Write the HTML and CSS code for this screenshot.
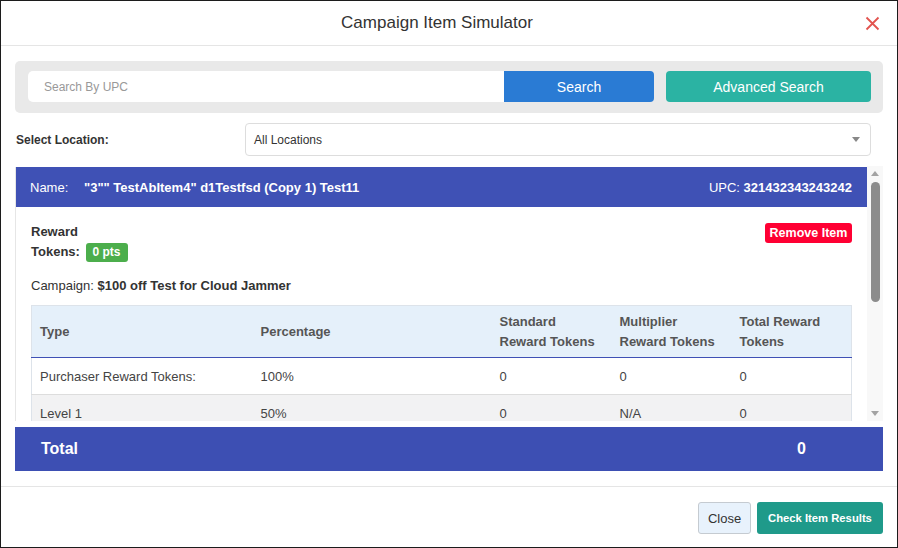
FILE: index.html
```html
<!DOCTYPE html>
<html lang="en">
<head>
    <meta charset="UTF-8">
    <meta name="viewport" content="width=device-width, initial-scale=1.0">
    <title>Campaign Item Simulator</title>
    <link rel="stylesheet" href="styles.css">
</head>
<body>
    <div class="modal">
        <div class="modal-header">
            <h2 class="modal-title">Campaign Item Simulator</h2>
            <button class="close-x" aria-label="Close">
                <svg width="15" height="15" viewBox="0 0 15 15">
                    <path d="M1.5 1.5 L13.5 13.5 M13.5 1.5 L1.5 13.5" stroke="#e2544f" stroke-width="1.8" fill="none"/>
                </svg>
            </button>
        </div>

        <div class="modal-body">
            <div class="search-panel">
                <div class="search-group">
                    <input type="text" class="search-input" placeholder="Search By UPC">
                    <button class="btn-search">Search</button>
                </div>
                <button class="btn-advanced">Advanced Search</button>
            </div>

            <div class="location-row">
                <label class="location-label">Select Location:</label>
                <div class="location-select">
                    <span>All Locations</span>
                    <span class="caret"></span>
                </div>
            </div>

            <div class="scroll-area">
                <div class="scroll-content">
                    <div class="item-header">
                        <div class="item-name"><span class="name-label">Name:</span><b>"3"" TestAbItem4" d1Testfsd (Copy 1) Test11</b></div>
                        <div class="item-upc">UPC: <b>321432343243242</b></div>
                    </div>
                    <div class="item-body">
                        <div class="tokens-row">
                            <div class="tokens-label">Reward<br>Tokens: <span class="badge">0 pts</span></div>
                            <button class="btn-remove">Remove Item</button>
                        </div>
                        <p class="campaign">Campaign: <b>$100 off Test for Cloud Jammer</b></p>

                        <table class="rewards">
                            <thead>
                                <tr>
                                    <th class="col-type">Type</th>
                                    <th class="col-pct">Percentage</th>
                                    <th class="col-num">Standard<br>Reward Tokens</th>
                                    <th class="col-num">Multiplier<br>Reward Tokens</th>
                                    <th class="col-num">Total Reward<br>Tokens</th>
                                </tr>
                            </thead>
                            <tbody>
                                <tr>
                                    <td>Purchaser Reward Tokens:</td>
                                    <td>100%</td>
                                    <td>0</td>
                                    <td>0</td>
                                    <td>0</td>
                                </tr>
                                <tr class="alt">
                                    <td>Level 1</td>
                                    <td>50%</td>
                                    <td>0</td>
                                    <td>N/A</td>
                                    <td>0</td>
                                </tr>
                            </tbody>
                        </table>
                    </div>
                </div>
                <div class="scrollbar">
                    <span class="arrow-up"></span>
                    <div class="scroll-track"><div class="scroll-thumb"></div></div>
                    <span class="arrow-down"></span>
                </div>
            </div>

            <div class="total-bar">
                <span class="total-label">Total</span>
                <span class="total-value">0</span>
            </div>
        </div>

        <div class="modal-footer">
            <button class="btn-close">Close</button>
            <button class="btn-check">Check Item Results</button>
        </div>
    </div>
</body>
</html>
```

FILE: styles.css
```css
* {
    margin: 0;
    padding: 0;
    box-sizing: border-box;
}

body {
    font-family: "Liberation Sans", Arial, sans-serif;
    font-size: 13px;
    color: #333;
    background-color: #fff;
}

button {
    font-family: inherit;
    border: none;
    cursor: pointer;
}

.modal {
    width: 898px;
    height: 548px;
    border: 1px solid #1c1c1c;
    background-color: #fff;
    display: flex;
    flex-direction: column;
    overflow: hidden;
}

/* header */
.modal-header {
    height: 45px;
    border-bottom: 1px solid #e5e5e5;
    display: flex;
    align-items: center;
    justify-content: center;
    position: relative;
    flex-shrink: 0;
    padding-right: 24px;
}

.modal-title {
    font-size: 17px;
    font-weight: normal;
    color: #333;
}

.close-x {
    position: absolute;
    right: 17px;
    top: 15px;
    background: none;
    width: 15px;
    height: 15px;
    display: flex;
}

/* body */
.modal-body {
    padding: 15px 14px 15px 14px;
    border-bottom: 1px solid #e5e5e5;
}

.search-panel {
    background-color: #e9e9e9;
    border-radius: 5px;
    padding: 10px 12px 11px 13px;
    display: flex;
    gap: 12px;
}

.search-group {
    display: flex;
    width: 626px;
    height: 31px;
}

.search-input {
    flex: 1;
    border: none;
    border-radius: 5px 0 0 5px;
    padding: 0 16px;
    font-family: inherit;
    font-size: 12px;
    color: #333;
    outline: none;
}

.search-input::placeholder {
    color: #999;
}

.btn-search {
    width: 150px;
    background-color: #2a7bd4;
    color: #fff;
    font-size: 14px;
    border-radius: 0 4px 4px 0;
}

.btn-advanced {
    width: 205px;
    height: 31px;
    background-color: #2bb3a3;
    color: #fff;
    font-size: 14px;
    border-radius: 4px;
}

.location-row {
    display: flex;
    align-items: center;
    margin-top: 10px;
    padding-right: 12px;
}

.location-label {
    width: 230px;
    padding-left: 1px;
    font-size: 12px;
    font-weight: bold;
    color: #333;
}

.location-select {
    flex: 1;
    height: 33px;
    border: 1px solid #ddd;
    border-radius: 4px;
    padding: 0 10px 0 8px;
    display: flex;
    align-items: center;
    justify-content: space-between;
    font-size: 12px;
    color: #333;
}

.caret {
    width: 0;
    height: 0;
    border-left: 4px solid transparent;
    border-right: 4px solid transparent;
    border-top: 5px solid #888;
}

/* scrolling item area */
.scroll-area {
    margin-top: 10px;
    height: 255px;
    display: flex;
}

.scroll-content {
    flex: 1;
    overflow: hidden;
    border-left: 1px solid #e6e6e6;
    margin-top: 1px;
}

.item-header {
    height: 40px;
    background-color: #3f51b5;
    color: #fff;
    display: flex;
    align-items: center;
    justify-content: space-between;
    padding: 0 15px 0 15px;
    margin-left: -1px;
}

.name-label {
    display: inline-block;
    width: 54px;
}

.item-body {
    padding: 15px 15px 0 15px;
}

.tokens-row {
    display: flex;
    justify-content: space-between;
    align-items: flex-start;
}

.tokens-label {
    font-weight: bold;
    line-height: 20px;
}

.badge {
    display: inline-block;
    background-color: #4cae4c;
    color: #fff;
    font-size: 12px;
    line-height: 19px;
    padding: 0 7px;
    border-radius: 3px;
    margin-left: 2px;
}

.btn-remove {
    background-color: #ff0033;
    color: #fff;
    font-weight: bold;
    font-size: 12.5px;
    height: 20px;
    width: 87px;
    border-radius: 3px;
    margin-top: 1px;
}

.campaign {
    margin-top: 14px;
    line-height: 20px;
}

.rewards {
    width: 100%;
    margin-top: 9px;
    border-collapse: collapse;
    table-layout: fixed;
    border: 1px solid #dde3ea;
}

.rewards th {
    background-color: #e5f0fa;
    color: #555;
    font-weight: bold;
    text-align: left;
    line-height: 20px;
    height: 52px;
    padding: 0 8px;
    border-bottom: 1px solid #3f51b5;
}

.rewards td {
    height: 37px;
    padding: 0 8px;
    color: #444;
    border-bottom: 1px solid #ddd;
}

.rewards tr.alt td {
    background-color: #f2f2f3;
}

.col-type { width: 221px; }
.col-pct { width: 239px; }
.col-num { width: 120px; }

/* fake scrollbar */
.scrollbar {
    width: 16px;
    background-color: #f8f8f8;
    display: flex;
    flex-direction: column;
    align-items: center;
    padding: 5px 0;
}

.arrow-up,
.arrow-down {
    width: 0;
    height: 0;
    border-left: 4px solid transparent;
    border-right: 4px solid transparent;
}

.arrow-up {
    border-bottom: 5px solid #a3a3a3;
}

.arrow-down {
    border-top: 5px solid #a3a3a3;
}

.scroll-track {
    flex: 1;
    width: 100%;
    display: flex;
    justify-content: center;
    padding-top: 6px;
}

.scroll-thumb {
    width: 9px;
    height: 120px;
    border-radius: 5px;
    background-color: #8c8c8c;
}

.total-bar {
    margin-top: 6px;
    height: 44px;
    background-color: #3d4fb3;
    color: #fff;
    font-size: 16px;
    font-weight: bold;
    display: flex;
    align-items: center;
    padding-left: 26px;
}

.total-label {
    flex: 1;
}

.total-value {
    width: 86px;
}

/* footer */
.modal-footer {
    flex: 1;
    display: flex;
    justify-content: flex-end;
    align-items: flex-start;
    gap: 6px;
    padding: 15px 14px 0 0;
}

.btn-close {
    height: 32px;
    width: 53px;
    background-color: #e8f2fc;
    border: 1px solid #c5cbd1;
    border-radius: 3px;
    font-size: 13px;
    color: #333;
}

.btn-check {
    height: 32px;
    width: 126px;
    background-color: #1f9a8a;
    color: #fff;
    font-size: 11.25px;
    font-weight: bold;
    border-radius: 3px;
}
```
